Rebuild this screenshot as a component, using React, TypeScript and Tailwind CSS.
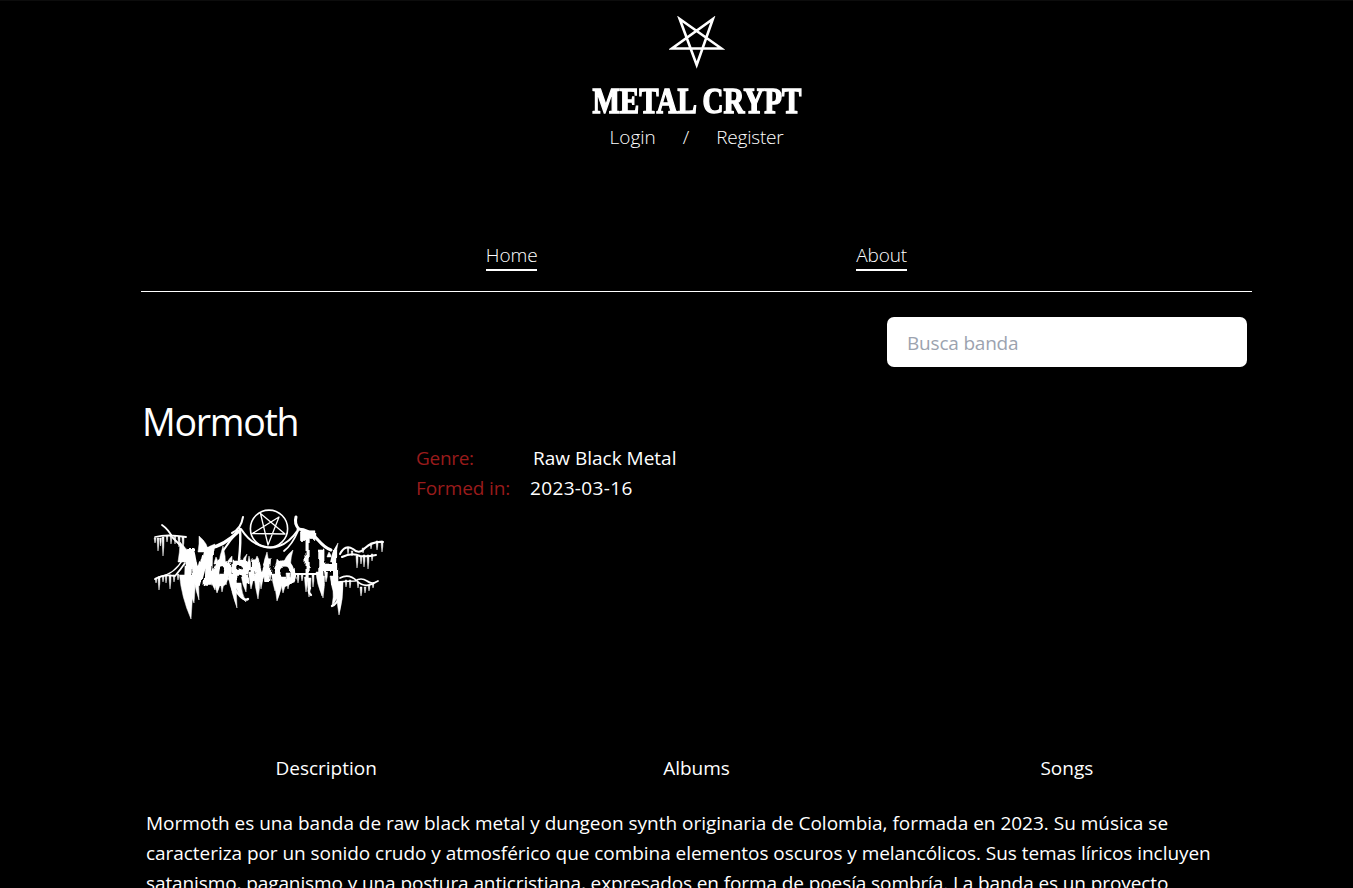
import React from "react";

type Drip = [x: number, y: number, length: number, width: number, lean?: number];

const drips: Drip[] = [
  [155, 538, 5, 1.6], [158, 538, 13, 1.8], [160.5, 538, 8, 1.6], [163, 537, 19, 2],
  [167, 536, 6, 1.5], [171, 536, 8, 1.5], [175, 536, 8, 1.5], [179, 537, 10, 2], [183, 537, 12, 2],
  [156, 578, 5, 1.6], [159, 577, 13, 2], [163, 576, 6, 1.6], [166, 575, 8, 1.6],
  [170, 575, 14, 2], [174, 575, 7, 1.6], [178, 574, 6, 1.6],
  [186, 575, 44, 13, 5], [191, 577, 26, 8, 3], [196, 573, 27, 5, 3], [201, 565, 14, 4, 1],
  [212, 571, 19, 7, 3], [217, 575, 18, 8], [222, 574, 18, 5], [226, 572, 13, 4],
  [232, 574, 24, 8, 3], [233, 577, 31, 6, 4], [238, 583, 19, 6, 8], [244, 577, 15, 5, 2],
  [251, 572, 17, 5], [257, 574, 25, 6, 1], [261, 572, 17, 4], [265, 568, 14, 4],
  [275, 574, 17, 7], [278, 577, 24, 8, -1], [283, 577, 16, 6], [288, 573, 16, 4], [293, 574, 9, 3],
  [298, 574, 9, 2], [302, 574, 7, 2], [306, 577, 15, 3], [309, 578, 19, 4], [313, 575, 12, 2],
  [319, 572, 24, 6, 3], [322, 576, 22, 5, 1], [326, 572, 10, 3],
  [334, 576, 23, 8, 2], [339, 582, 33, 8, 0], [336, 588, 18, 6, -4],
  [346, 580, 7, 1.6], [350, 580, 8, 1.6], [358, 582, 6, 1.6], [361, 587, 9, 2], [365, 587, 6, 1.6],
  [369, 585, 6, 1.6], [373, 583, 5, 1.6],
  [348, 548, 6, 1.6], [352, 551, 5, 1.6], [357, 556, 12, 2], [361, 556, 8, 1.6], [364, 555, 12, 2],
  [368, 555, 14, 2], [372, 554, 7, 1.6], [363, 548, 5, 1.6], [371, 543, 6, 1.6], [377, 541, 9, 2], [382, 541, 11, 2],
];

const spikes: Drip[] = [
  [203, 552, -16, 10, -4], [209, 551, -7, 10, 6], [184, 562, -20, 12, -4], [222, 566, -20, 7, 1], [216, 564, -7, 4],
  [230, 562, -6, 4, 2], [244, 562, -8, 3, 3], [249, 570, -14, 4, 0],
  [257, 562, -6, 4], [266, 566, -14, 5, 1], [278, 564, -5, 4, -1],
  [287, 564, -14, 7, 6], [333, 562, -19, 5, 5], [329, 557, -5, 4],
];

const taper = ([x, y, length, width, lean = 0]: Drip) =>
  `M${x - width / 2} ${y}Q${x - width * 0.35} ${y + length * 0.5} ${x + lean} ${y + length}Q${x + width * 0.55} ${y + length * 0.5} ${x + width / 2} ${y}Z`;

const letters = [
  { ch: "M", x: 183, y: 584, sx: 0.72, sy: 1.02, skew: -2, stroke: 3.5 },
  { ch: "O", x: 212, y: 584, sx: 0.46, sy: 0.68, skew: -4, stroke: 5 },
  { ch: "R", x: 231, y: 583, sx: 0.5, sy: 0.64, skew: 0, stroke: 4 },
  { ch: "M", x: 249, y: 581, sx: 0.54, sy: 0.6, skew: -4, stroke: 3 },
  { ch: "O", x: 274, y: 585, sx: 0.54, sy: 0.68, skew: 0, stroke: 5 },
  { ch: "T", x: 300, y: 582, sx: 0.5, sy: 1.5, skew: 0, stroke: 0.5 },
  { ch: "H", x: 317, y: 584, sx: 0.62, sy: 0.96, skew: 0, stroke: 2.5 },
];

function Pentagram() {
  return (
    <svg viewBox="0 0 56 54" className="h-[54px] w-14" fill="none" stroke="#fff" strokeWidth="2.6">
      <path d="M10.7 3 27.7 49 43.9 3 3 32.5h49.5Z" strokeMiterlimit="6" />
    </svg>
  );
}

function BandLogo() {
  return (
    <svg viewBox="141 443 250 250" className="block size-[250px]" fill="#fff" aria-label="Mormoth">
      <filter id="rough" x="-5%" y="-5%" width="110%" height="110%">
        <feTurbulence type="fractalNoise" baseFrequency="0.14 0.07" numOctaves="2" seed="3" />
        <feDisplacementMap in="SourceGraphic" scale="6" xChannelSelector="R" yChannelSelector="G" />
      </filter>
      <g fill="none" stroke="#fff" strokeLinecap="round" strokeLinejoin="round">
        <circle cx="269" cy="528.7" r="18.6" strokeWidth="1.6" />
        <path d="M260.5 513.5 268 545 279 517 252.5 533.5 285 534Z" strokeWidth="1.3" />
        <path d="M155 537q12-3 31 0M162 525q6 4 11 13l15 15M155 579q9-5 20-3 6-7 10-13" strokeWidth="1.8" />
        <path d="M159 577q16-3 24-18" strokeWidth="1.4" />
        <path d="M207 549q17-3 32-18" strokeWidth="3.2" />
        <path d="M232 533q9-4 11-16M238 531q-8 9-15 20" strokeWidth="2" />
        <path d="M240 529q1 12-1 31" strokeWidth="2.4" />
        <path d="M241 529q8 12 16 15 12 6 22 2 10-3 19-16" strokeWidth="2.1" />
        <path d="M299 529q-5-5-3-12M298 529q11 0 20 11 7 8 13 10" strokeWidth="3" />
        <path d="M298 531q-6 14-14 20" strokeWidth="1.8" />
        <path d="M340 554q5-10 13-5 6 6 12-1 8-7 18-6M342 557q10-5 18-1 8 1 16-1" strokeWidth="2" />
        <path d="M338 582q12-1 17-1 6-4 12 0 5 4 11 0M340 578q9-5 17 3 8 8 19 1" strokeWidth="1.7" />
        <path d="M236 591q8 11 12 8M332 606q5-2 7-9M311 595q-4-4-1-7M294 574h24" strokeWidth="2.2" />
      </g>
      <g filter="url(#rough)" fontFamily="Liberation Sans, sans-serif" fontWeight="700" fontSize="50" stroke="#fff" strokeLinejoin="round">
        {letters.map((l, i) => (
          <text key={i} strokeWidth={l.stroke} transform={`translate(${l.x} ${l.y}) skewX(${l.skew}) scale(${l.sx} ${l.sy})`}>
            {l.ch}
          </text>
        ))}
      </g>
      {[...drips, ...spikes].map((d, i) => (
        <path key={i} d={taper(d)} stroke="#fff" strokeWidth="0.5" />
      ))}
    </svg>
  );
}

export default function App() {
  return (
    <div className="h-[888px] overflow-hidden border-t border-[#0c0c0c] bg-black pl-[141px] pr-[101px] font-['Open_Sans',sans-serif] text-[19px] leading-[30px] text-white">
      <header className="flex flex-col items-center pt-[15px]">
        <Pentagram />
        <h1 className="mt-3 flex h-[40px] origin-center scale-x-[0.83] items-center whitespace-nowrap font-['Liberation_Serif',serif] text-[35px] font-bold leading-[40px] [-webkit-text-stroke:1.4px_#fff]">
          METAL CRYPT
        </h1>
        <div className="flex w-[174px] justify-between font-light">
          <a>Login</a>
          <span>/</span>
          <a className="tracking-[-0.2px]">Register</a>
        </div>
      </header>

      <nav className="mt-[88px] flex h-[52px] justify-center border-b border-white font-light">
        <div className="flex w-[740px] justify-around tracking-[-0.1px]">
          <a className="h-[31px] border-b-2 border-white">Home</a>
          <a className="h-[31px] border-b-2 border-white">About</a>
        </div>
      </nav>

      <div className="flex justify-end pt-[25px] pr-[5px]">
        <input
          type="text"
          placeholder="Busca banda"
          className="h-[50px] w-[360px] rounded-[7px] bg-white px-5 pt-[2px] tracking-[-0.2px] text-black outline-none placeholder:text-[#9ca3af]"
        />
      </div>

      <main>
        <h2 className="mt-[32px] h-[44px] pl-px text-[37.5px] leading-[45px] tracking-[-1.3px]">Mormoth</h2>
        <section className="flex h-[250px] gap-[25px]">
          <BandLogo />
          <dl>
            <div className="flex">
              <dt className="w-[117px] tracking-[-0.3px] text-[#991b1b]">Genre:</dt>
              <dd>Raw Black Metal</dd>
            </div>
            <div className="flex">
              <dt className="w-[114px] tracking-[-0.1px] text-[#991b1b]">Formed in:</dt>
              <dd className="tracking-[0.35px]">2023-03-16</dd>
            </div>
          </dl>
        </section>
        <div className="mt-[60px] grid grid-cols-3 text-center">
          <button>Description</button>
          <button>Albums</button>
          <button>Songs</button>
        </div>
        <p className="mt-[25px] whitespace-nowrap pl-[5px]">
          <span className="tracking-[-0.01px]">
            Mormoth es una banda de raw black metal y dungeon synth originaria de Colombia, formada en 2023. Su música se
          </span>
          <br />
          <span className="tracking-[-0.05px]">
            caracteriza por un sonido crudo y atmosférico que combina elementos oscuros y melancólicos. Sus temas líricos incluyen
          </span>
          <br />
          <span className="tracking-[-0.1px]">
            satanismo, paganismo y una postura anticristiana, expresados en forma de poesía sombría. La banda es un proyecto
          </span>
        </p>
      </main>
    </div>
  );
}
